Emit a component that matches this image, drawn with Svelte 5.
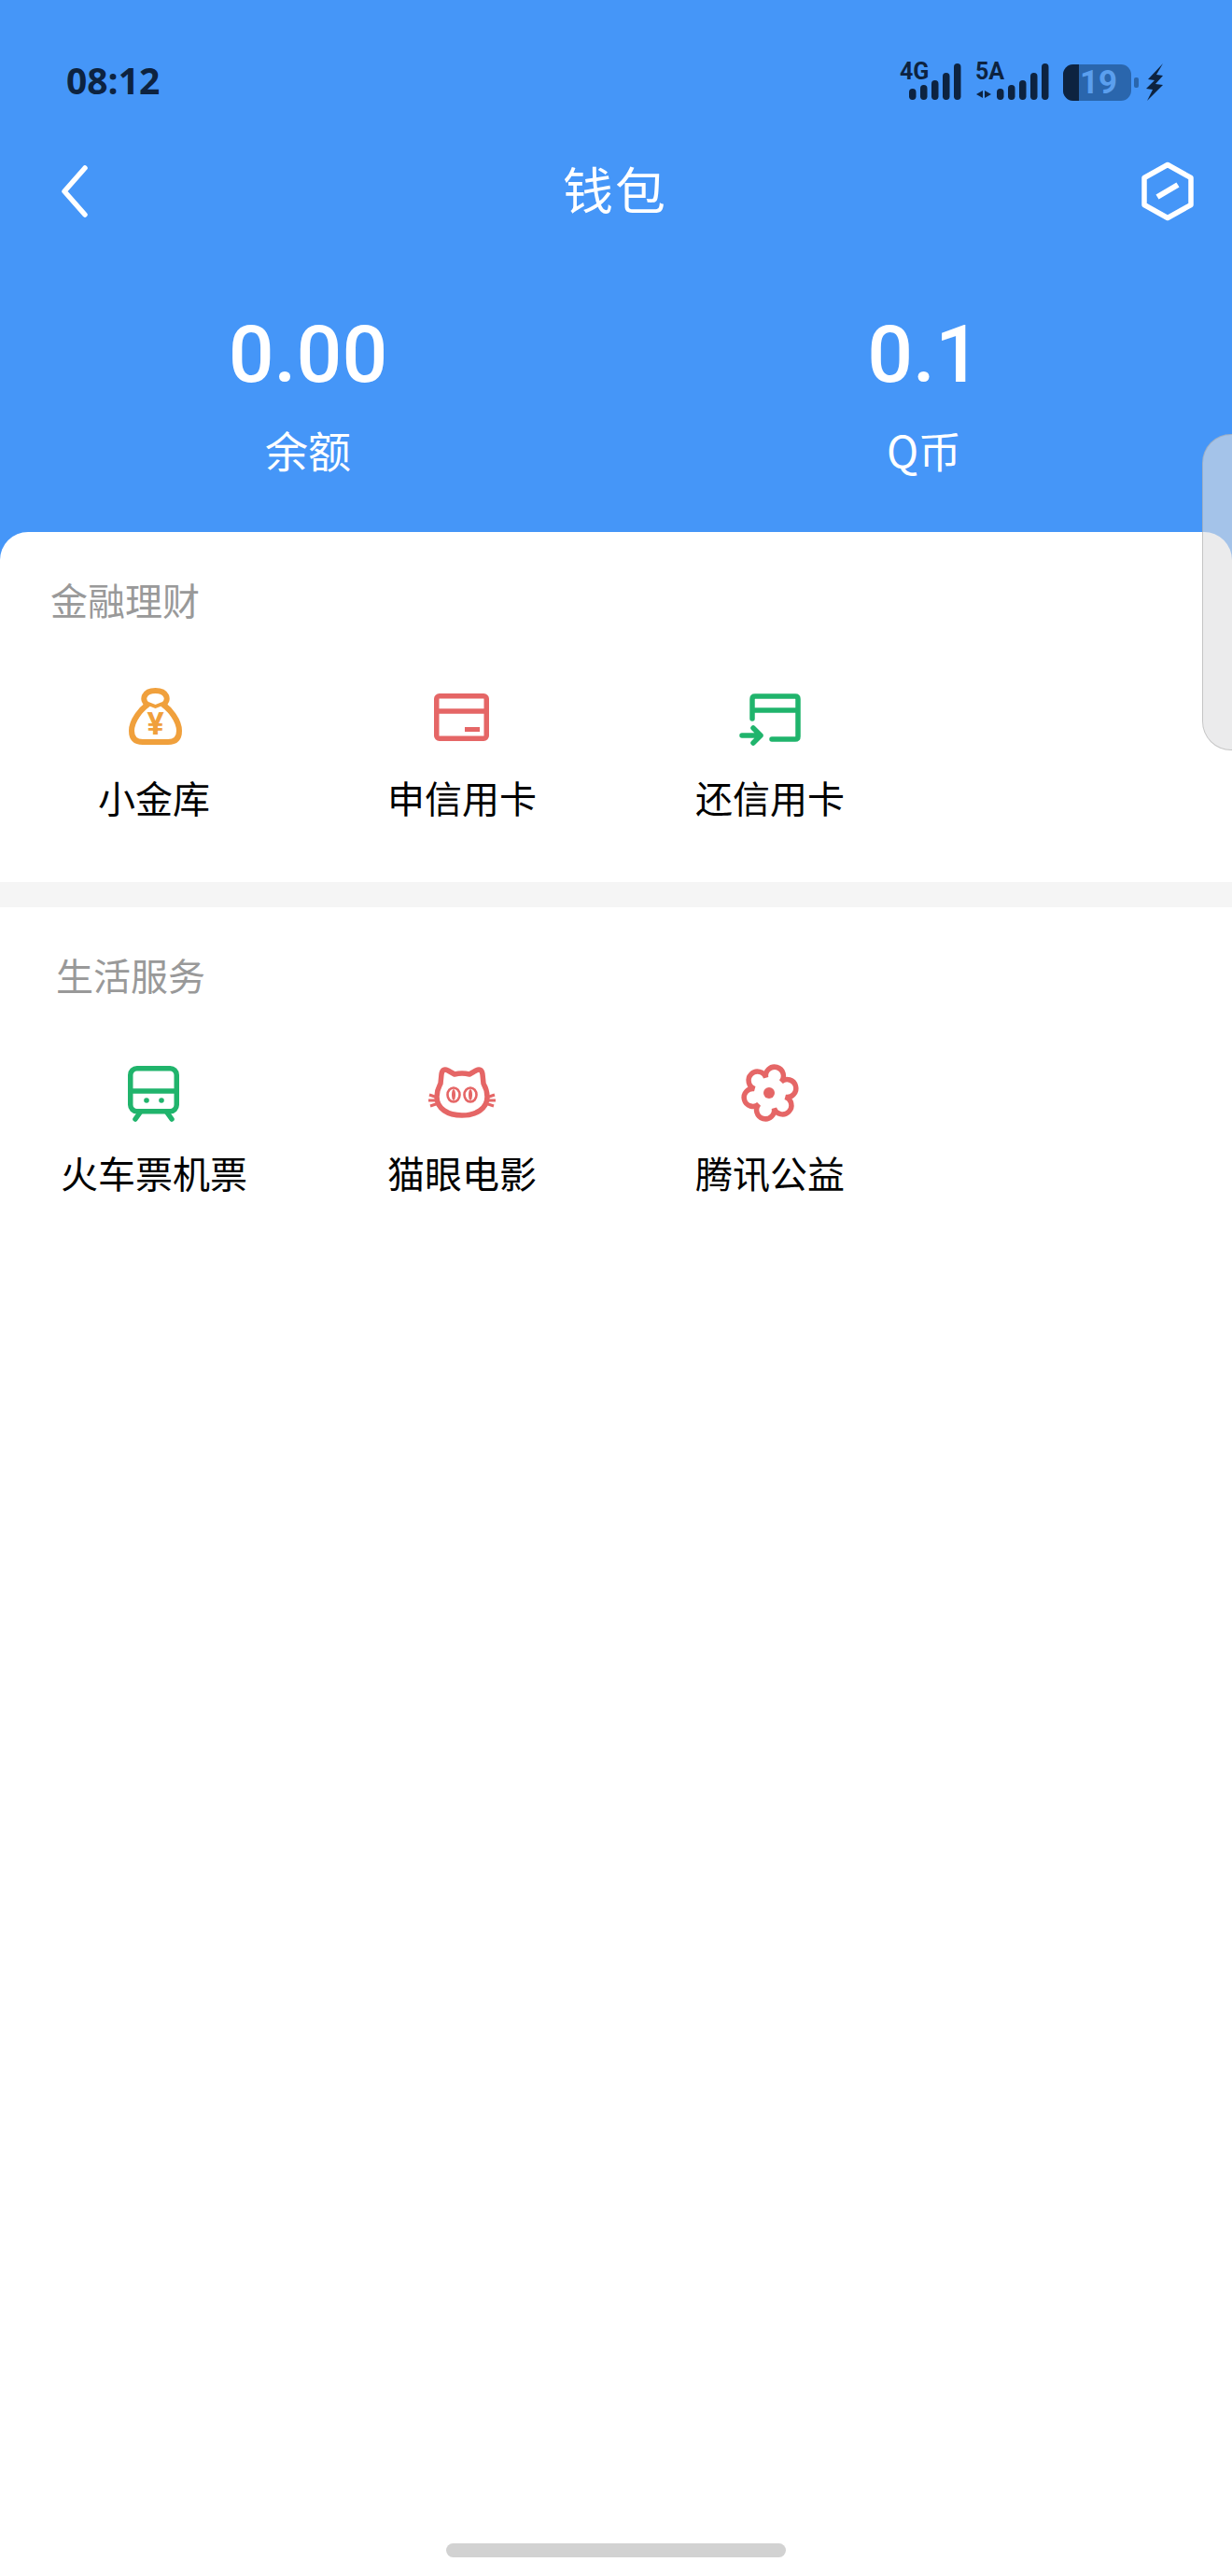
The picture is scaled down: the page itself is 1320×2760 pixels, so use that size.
<script>
  const finance = [
    { icon: 'bag', label: '小金库' },
    { icon: 'card', label: '申信用卡' },
    { icon: 'repay', label: '还信用卡' }
  ];
  const life = [
    { icon: 'train', label: '火车票机票' },
    { icon: 'cat', label: '猫眼电影' },
    { icon: 'flower', label: '腾讯公益' }
  ];

  // tops of the five signal bars, bars all end at y=39
  const barTops = [27, 23, 18, 10, 0];

  // six lobes round the centre of the charity icon
  function flowerPath(cx, cy, valley, r) {
    let d = '';
    for (let i = 0; i <= 6; i++) {
      const a = ((i * 60 + 15) * Math.PI) / 180;
      const x = (cx + valley * Math.cos(a)).toFixed(1);
      const y = (cy + valley * Math.sin(a)).toFixed(1);
      d += i === 0 ? `M${x} ${y}` : ` A${r} ${r} 0 1 1 ${x} ${y}`;
    }
    return d + 'Z';
  }
</script>

{#snippet signal(name, width, start, arrows)}
  <div class="signal" style="width: {width}px">
    <svg width={width} height="40" viewBox="0 0 {width} 40">
      {#if arrows}
        <path d="M8 29 L1 33 L8 37Z M10 29 L17 33 L10 37Z" fill="#0d2340" />
      {/if}
      {#each barTops as top, i}
        <rect x={start + i * 12} y={top} width="7.5" height={39 - top} rx="3.7" fill="#0d2340" />
      {/each}
    </svg>
    <span class="net">{name}</span>
  </div>
{/snippet}

{#snippet icon(name)}
  <svg class="icon" width="64" height="64" viewBox="0 0 64 64">
    {#if name === 'bag'}
      <g fill="none" stroke="#f0a03c" stroke-width="6" stroke-linejoin="round">
        <path d="M25 20 C18 15 21 5 33.5 5 C46 5 49 15 42 20 C49 25 59 37 59 48 C59 57 54 60 47 60 L20 60 C13 60 8 57 8 48 C8 37 18 25 25 20Z" />
        <path d="M26 19 L33.5 22 L41 19" stroke-width="4" />
      </g>
      <text x="33.5" y="52" class="yen">¥</text>
    {:else if name === 'card'}
      <g fill="none" stroke="#e56666" stroke-width="5.5">
        <rect x="4.75" y="10.75" width="53.5" height="45.5" rx="3" />
        <path d="M4 27 H59" />
      </g>
      <rect x="35" y="44" width="16" height="5" fill="#e56666" />
    {:else if name === 'repay'}
      <g fill="none" stroke="#20b46c" stroke-width="5.5" stroke-linecap="round" stroke-linejoin="round">
        <path d="M13 35 V14 Q13 11 16 11 H59 Q62 11 62 14 V54 Q62 57 59 57 H34" />
        <path d="M13 26 H62" stroke-linecap="butt" />
        <path d="M2 53 H22 M14 45 L22 53 L14 61" />
      </g>
    {:else if name === 'train'}
      <g fill="none" stroke="#20b46c" stroke-width="5.5" stroke-linecap="round">
        <rect x="6.75" y="7.75" width="49.5" height="46" rx="7" />
        <path d="M6 32 H57" stroke-linecap="butt" />
        <path d="M17 55 L12 62 M46 55 L51 62" />
      </g>
      <circle cx="24" cy="42" r="2.8" fill="#20b46c" />
      <circle cx="40" cy="42" r="2.8" fill="#20b46c" />
    {:else if name === 'cat'}
      <g fill="none" stroke="#e56666" stroke-width="5.5" stroke-linejoin="round">
        <path d="M10 14 Q11 7 17 10 L24 14 Q32 12 40 14 L47 10 Q53 7 54 14 L55 24 Q59 31 59 38 C59 51 47 58 32 58 C17 58 5 51 5 38 C5 31 7 28 9 24Z" />
        <path d="M-3 36 L6 39 M-4 42 L6 42 M-2 48 L7 45 M67 36 L58 39 M68 42 L58 42 M66 48 L57 45" stroke-width="3" />
        <ellipse cx="23" cy="36" rx="6.5" ry="7.5" stroke-width="2.6" />
        <ellipse cx="41" cy="36" rx="6.5" ry="7.5" stroke-width="2.6" />
      </g>
      <ellipse cx="23" cy="36" rx="2" ry="6" fill="#e56666" />
      <ellipse cx="41" cy="36" rx="2" ry="6" fill="#e56666" />
    {:else if name === 'flower'}
      <path d={flowerPath(32, 34, 17, 9.5)} fill="none" stroke="#e56666" stroke-width="5.5" />
      <circle cx="31" cy="34" r="6" fill="#e56666" />
    {/if}
  </svg>
{/snippet}

<div class="page">
  <header class="header">
    <div class="status">
      <span class="time">08:12</span>
      <div class="status-right">
        {@render signal('4G', 66, 10, false)}
        {@render signal('5A', 79, 23, true)}
        <div class="battery">
          <div class="battery-body">
            <div class="battery-level"></div>
            <span class="battery-text">19</span>
          </div>
          <div class="battery-nub"></div>
        </div>
        <svg class="bolt" width="18" height="40" viewBox="0 0 18 40">
          <path d="M18 0 L2 17 L9 18 L0 27 L7 28 L1 40 L18 23 L10 22 L18 13 L11 12Z" fill="#0d2340" />
        </svg>
      </div>
    </div>

    <nav class="nav">
      <svg class="back" width="30" height="56" viewBox="0 0 30 56">
        <path d="M26 3 L4 28 L26 53" fill="none" stroke="#fff" stroke-width="5.5" stroke-linecap="round" stroke-linejoin="round" />
      </svg>
      <h1>钱包</h1>
      <svg class="hex" width="56" height="64" viewBox="0 0 56 64">
        <path d="M28 3.5 L53 17.5 V46.5 L28 60.5 L3 46.5 V17.5Z" fill="none" stroke="#fff" stroke-width="5.5" stroke-linejoin="round" />
        <path d="M17 38 L39 25" stroke="#fff" stroke-width="6" />
      </svg>
    </nav>

    <div class="balances">
      <div class="balance">
        <div class="amount">0.00</div>
        <div class="caption">余额</div>
      </div>
      <div class="balance">
        <div class="amount">0.1</div>
        <div class="caption">Q币</div>
      </div>
    </div>
  </header>

  <main class="content">
    <section class="group">
      <h2 class="group-title">金融理财</h2>
      <div class="grid">
        {#each finance as item}
          <div class="item">
            {@render icon(item.icon)}
            <span class="label">{item.label}</span>
          </div>
        {/each}
      </div>
    </section>

    <div class="divider"></div>

    <section class="group">
      <h2 class="group-title life">生活服务</h2>
      <div class="grid">
        {#each life as item}
          <div class="item">
            {@render icon(item.icon)}
            <span class="label">{item.label}</span>
          </div>
        {/each}
      </div>
    </section>
  </main>

  <div class="side-panel"></div>
  <div class="home-bar"></div>
</div>

<style>
  :global(body) {
    margin: 0;
    background: #fff;
  }

  .page {
    position: relative;
    width: 1320px;
    height: 2760px;
    overflow: hidden;
    background: #4596f8;
    font-family: "Noto Sans CJK SC", "Noto Sans", sans-serif;
  }

  .header {
    height: 570px;
    box-sizing: border-box;
    color: #fff;
  }

  .status {
    height: 172px;
    padding: 0 74px 0 71px;
    display: flex;
    align-items: center;
    justify-content: space-between;
  }

  .time {
    margin-bottom: 2px;
    font-family: "Open Sans", sans-serif;
    font-size: 39px;
    font-weight: 700;
    color: #0d2340;
  }

  .status-right {
    display: flex;
    align-items: center;
    gap: 15px;
    margin-top: 4px;
  }

  .signal {
    position: relative;
    height: 40px;
  }

  .signal svg {
    display: block;
  }

  .net {
    position: absolute;
    left: 0;
    top: -4px;
    font-family: "Roboto", sans-serif;
    font-size: 25px;
    font-weight: 700;
    line-height: 25px;
    color: #0d2340;
  }

  .battery {
    display: flex;
    align-items: center;
    gap: 3px;
  }

  .battery-body {
    position: relative;
    box-sizing: border-box;
    width: 73px;
    height: 39px;
    padding-left: 18px;
    border-radius: 11px;
    background: #2a66ad;
    display: flex;
    align-items: center;
  }

  .battery-level {
    position: absolute;
    left: 0;
    top: 0;
    bottom: 0;
    width: 17px;
    border-radius: 11px 0 0 11px;
    background: #0d2340;
  }

  .battery-text {
    position: relative;
    font-family: "Roboto", sans-serif;
    font-size: 35px;
    font-weight: 700;
    line-height: 39px;
    color: #5b9fee;
  }

  .battery-nub {
    width: 5px;
    height: 11px;
    border-radius: 2px;
    background: #2a66ad;
  }

  .bolt {
    margin-left: -7px;
  }

  .nav {
    height: 66px;
    padding: 0 41px 0 65px;
    display: flex;
    align-items: center;
    justify-content: space-between;
  }

  .nav h1 {
    margin: 0 0 6px;
    font-size: 54px;
    font-weight: 400;
    line-height: 60px;
    letter-spacing: 2px;
  }

  .balances {
    margin-top: 92px;
    display: grid;
    grid-template-columns: 1fr 1fr;
  }

  .balance {
    text-align: center;
  }

  .amount {
    font-family: "Roboto", sans-serif;
    font-size: 86px;
    font-weight: 500;
    line-height: 100px;
  }

  .caption {
    margin-top: 21px;
    font-size: 46px;
    line-height: 60px;
  }

  .content {
    height: 2190px;
    border-radius: 30px 30px 0 0;
    background: #fff;
    overflow: hidden;
  }

  .group {
    padding: 44px 0 63px;
  }

  .group-title {
    margin: 0 0 65px;
    padding-left: 54px;
    font-size: 40px;
    font-weight: 400;
    line-height: 56px;
    color: #999;
  }

  .group-title.life {
    padding-left: 60px;
  }

  .divider {
    height: 27px;
    background: #f5f5f5;
  }

  .grid {
    display: grid;
    grid-template-columns: repeat(4, 330px);
  }

  .item {
    display: flex;
    flex-direction: column;
    align-items: center;
    gap: 27px;
  }

  .icon {
    display: block;
    overflow: visible;
  }

  .yen {
    font-family: "Roboto", sans-serif;
    font-size: 34px;
    font-weight: 700;
    text-anchor: middle;
    fill: #f0a03c;
  }

  .label {
    font-size: 40px;
    line-height: 56px;
    color: #000;
    white-space: nowrap;
  }

  .side-panel {
    position: absolute;
    top: 465px;
    right: -30px;
    width: 60px;
    height: 337px;
    border: 1px solid rgba(150, 150, 150, 0.45);
    border-radius: 34px;
    background: rgba(222, 222, 225, 0.62);
  }

  .home-bar {
    position: absolute;
    left: 478px;
    top: 2725px;
    width: 364px;
    height: 15px;
    border-radius: 8px;
    background: #d2d2d2;
  }
</style>
